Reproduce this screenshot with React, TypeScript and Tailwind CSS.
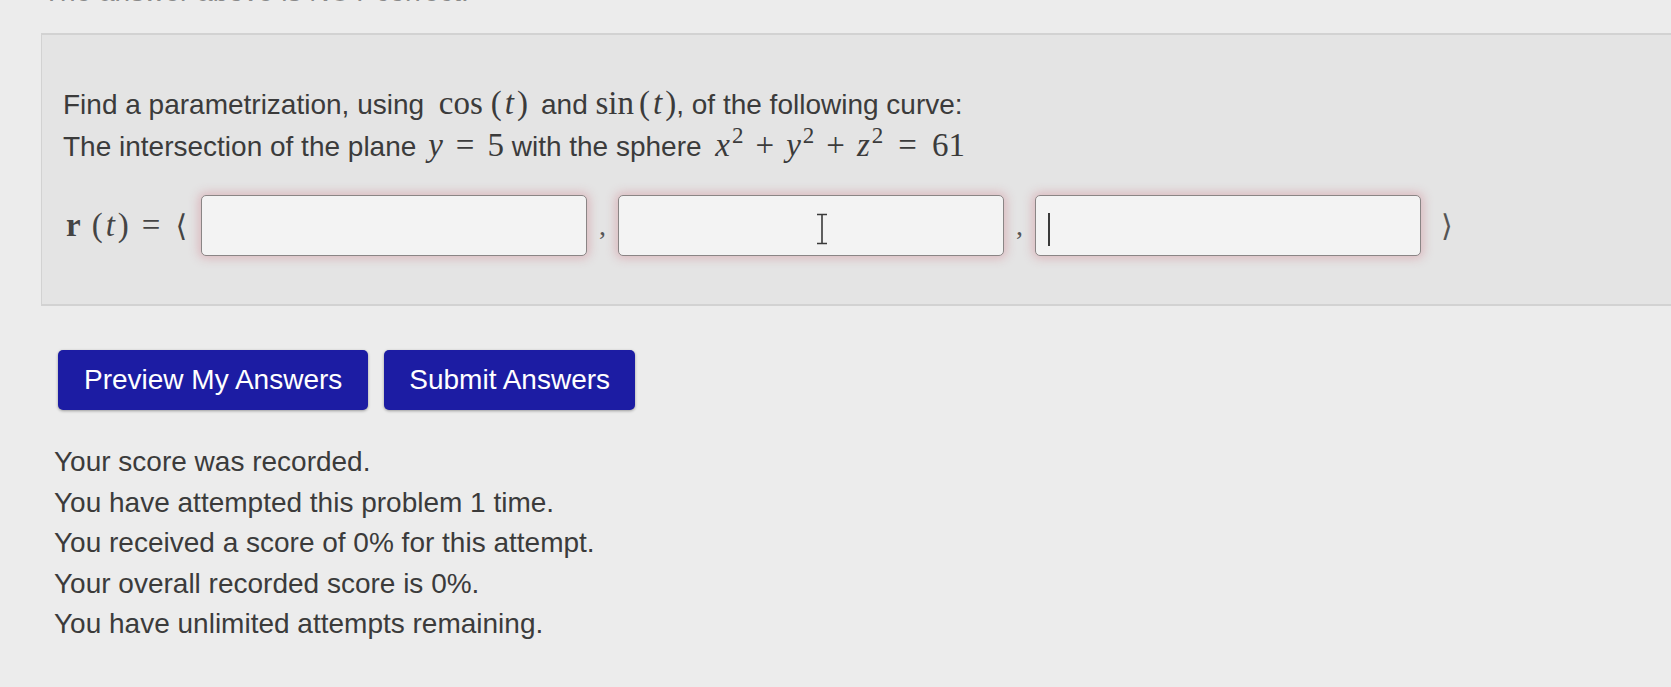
import React from 'react';

const serif = "font-['Liberation_Serif','DejaVu_Serif',serif]";

function M({ children, className = '' }: { children: React.ReactNode; className?: string }) {
  return <span className={`${serif} text-[33px] inline-block ${className}`}>{children}</span>;
}

function Sup({ children }: { children: React.ReactNode }) {
  return <sup className="text-[23px] ml-[2px] -top-[0.55em]">{children}</sup>;
}

function AnswerBox({ cursor }: { cursor?: 'ibeam' | 'caret' }) {
  return (
    <div className="relative w-[386px] h-[61px] shrink-0 rounded-[5px] border border-[#8a8585] bg-[#f3f3f3] shadow-[0_0_10px_3px_rgba(210,140,150,0.45)]">
      {cursor === 'ibeam' && (
        <svg className="absolute left-[196px] top-[17px]" width="14" height="32" viewBox="0 0 14 32">
          <path d="M2 1.5h10M7 1.5v29M2 30.5h10" stroke="#3a3a3a" strokeWidth="1.6" fill="none" />
        </svg>
      )}
      {cursor === 'caret' && <span className="absolute left-[12px] top-[17px] w-[2px] h-[33px] bg-[#3a3a3a]" />}
    </div>
  );
}

function Comma() {
  return <span className={`mx-[9px] w-[13px] text-center ${serif} text-[28px] text-[#555]`}>,</span>;
}

export default function App() {
  return (
    <div className="w-[1671px] h-[687px] overflow-hidden bg-[#ececec] font-['Liberation_Sans',Arial,sans-serif] text-[28px] text-[#3b3b3b]">
      <div className="h-[8px] overflow-hidden">
        <p className="pl-[43px] -mt-[24px] leading-[32px] text-[#8a8a8a]">The answer above is NOT correct.</p>
      </div>

      <div className="ml-[41px] mt-[25px] h-[273px] bg-[#e4e4e4] border-t-2 border-l border-b-2 border-[#d2d2d2] pl-[21px] pt-[48px]">
        <p className="leading-[40px] whitespace-nowrap">
          Find a parametrization, using <M className="ml-[7px]">cos</M>
          <M className="ml-[8px]">
            (<span className="italic px-[3px]">t</span>)
          </M>
          <span className="ml-[13px]">and</span> <M>sin</M>
          <M className="ml-[5px]">
            (<span className="italic px-[3px]">t</span>)
          </M>
          , of the following curve:
        </p>
        <p className="leading-[40px] whitespace-nowrap">
          The intersection of the plane{' '}
          <M className="ml-[4px]">
            <span className="italic">y</span>
            <span className="mx-[13px]">=</span>5
          </M>{' '}
          with the sphere{' '}
          <M className="ml-[6px]">
            <span className="italic">x</span>
            <Sup>2</Sup>
            <span className="mx-[12px]">+</span>
            <span className="italic">y</span>
            <Sup>2</Sup>
            <span className="mx-[12px]">+</span>
            <span className="italic">z</span>
            <Sup>2</Sup>
            <span className="mx-[15px]">=</span>61
          </M>
        </p>

        <div className="mt-[28px] flex items-center">
          <div className={`flex items-center w-[138px] ${serif} text-[33px] text-[#444]`}>
            <span className="font-bold ml-[3px]">r</span>
            <span className="ml-[11px]">(</span>
            <span className="italic px-[3px]">t</span>
            <span>)</span>
            <span className="ml-[13px]">=</span>
            <span className="ml-[15px] text-[30px]">⟨</span>
          </div>
          <AnswerBox />
          <Comma />
          <AnswerBox cursor="ibeam" />
          <Comma />
          <AnswerBox cursor="caret" />
          <span className={`ml-[20px] ${serif} text-[30px] text-[#555]`}>⟩</span>
        </div>
      </div>

      <div className="mt-[44px] ml-[58px] flex gap-[16px]">
        <button className="h-[60px] px-[26px] rounded-[5px] bg-[#1c1ca3] text-white text-[28px] shadow-[0_1px_3px_rgba(0,0,0,0.35)]">
          Preview My Answers
        </button>
        <button className="h-[60px] px-[25px] rounded-[5px] bg-[#1c1ca3] text-white text-[28px] shadow-[0_1px_3px_rgba(0,0,0,0.35)]">
          Submit Answers
        </button>
      </div>

      <div className="mt-[32px] ml-[54px] leading-[40.5px]">
        <p>Your score was recorded.</p>
        <p>You have attempted this problem 1 time.</p>
        <p>You received a score of 0% for this attempt.</p>
        <p>Your overall recorded score is 0%.</p>
        <p>You have unlimited attempts remaining.</p>
      </div>
    </div>
  );
}
